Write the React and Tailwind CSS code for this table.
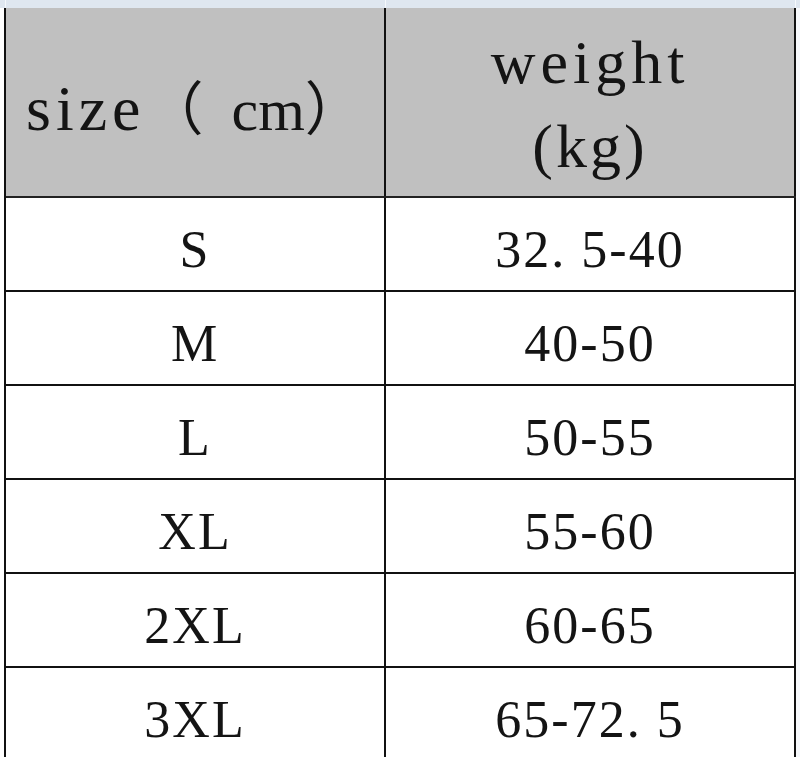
export default function App() {
  const rows = [
    ["S", "32. 5-40"],
    ["M", "40-50"],
    ["L", "50-55"],
    ["XL", "55-60"],
    ["2XL", "60-65"],
    ["3XL", "65-72. 5"],
  ];
  const font = { fontFamily: '"Liberation Serif", "Noto Sans CJK SC", serif' };
  return (
    <div className="w-[800px] h-[757px] overflow-hidden bg-white text-[#141414]" style={font}>
      <div className="h-[8px] bg-[#dfe7f0] flex">
        <div className="w-[6px] border-r border-[#f4f7fb]" />
        <div className="w-[380px] border-r border-[#f4f7fb]" />
        <div className="w-[410px] border-r border-[#f4f7fb]" />
      </div>
      <div className="flex">
        <div className="ml-[4px] border-l-2 border-[#111] w-[792px] shrink-0">
          <div className="flex h-[190px] bg-[#c0c0c0] border-b-2 border-[#222]">
            <div className="w-[380px] border-r-2 border-[#111] flex items-center pl-[20px] pt-[14px]">
              <span className="whitespace-pre leading-none flex items-baseline">
                <span className="text-[64px] tracking-[5px]">size</span>
                <span className="text-[58px]">（</span>
                <span className="text-[60px] ml-[28px]">cm</span>
                <span className="text-[58px]">）</span>
              </span>
            </div>
            <div className="w-[410px] border-r-2 border-[#111] flex flex-col items-center justify-center pt-[4px]">
              <span className="text-[62px] leading-[84px] tracking-[5px]">weight</span>
              <span className="text-[62px] leading-[84px] tracking-[3px]">(kg)</span>
            </div>
          </div>
          {rows.map(([s, w]) => (
            <div key={s} className="flex h-[94px] border-b-2 border-[#111]">
              <div className="w-[380px] border-r-2 border-[#111] flex items-center justify-center pt-[12px]">
                <span className="text-[52px] tracking-[2px]">{s}</span>
              </div>
              <div className="w-[410px] border-r-2 border-[#111] flex items-center justify-center pt-[12px]">
                <span className="text-[52px] tracking-[2px] whitespace-pre">{w}</span>
              </div>
            </div>
          ))}
        </div>
        <div className="flex-1 bg-[#f6f8fb]" />
      </div>
    </div>
  );
}
